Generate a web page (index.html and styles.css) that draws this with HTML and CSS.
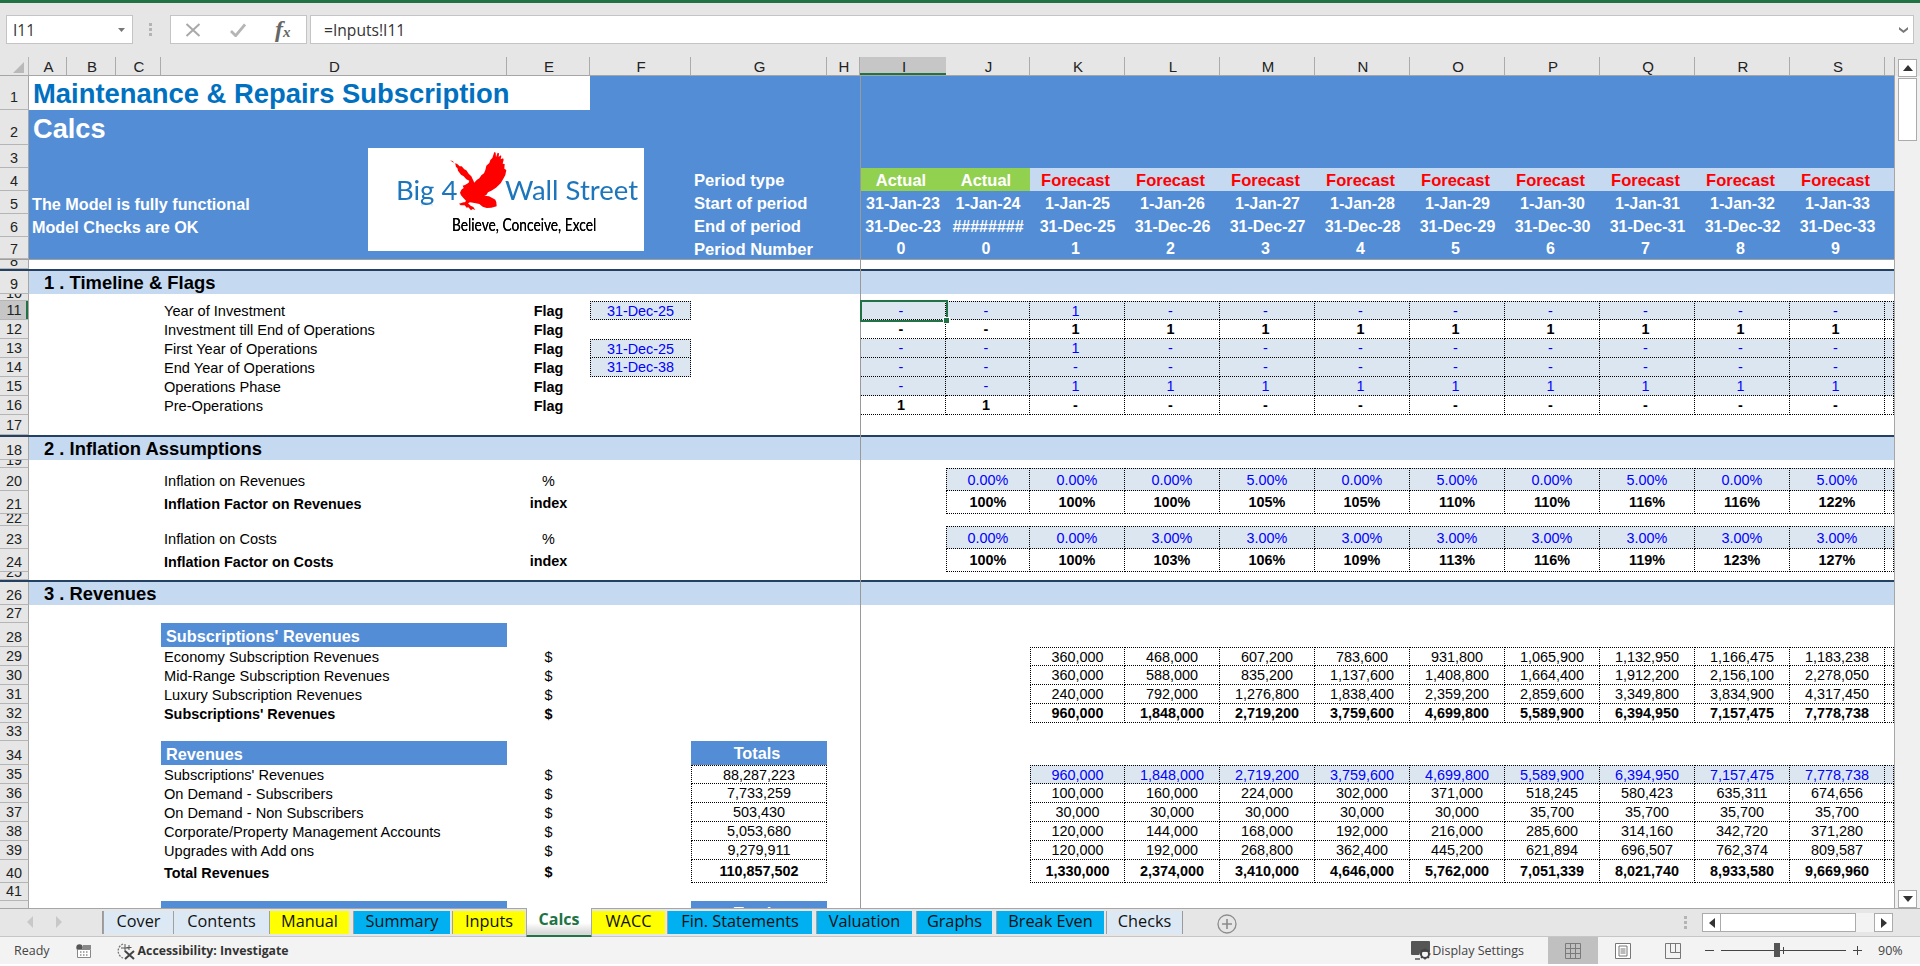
FILE: index.html
```html
<!DOCTYPE html>
<html lang="en">
<head>
<meta charset="utf-8">
<title>Maintenance &amp; Repairs Subscription - Calcs</title>
<link rel="stylesheet" href="styles.css">
</head>
<body>
<div class="app">
  <div class="titlebar"></div>

  <div class="fbar">
    <div class="namebox"><span>I11</span><svg class="ddn" viewBox="0 0 7 4"><path d="M0 0h7L3.500 4z"/></svg></div>
    <div class="grip"><i></i><i></i><i></i></div>
    <div class="fbtns">
      <svg class="ficon" viewBox="0 0 16 14"><path d="M1.500 1l13 12M14.500 1l-13 12" fill="none" stroke="#a9a9a9" stroke-width="2"/></svg>
      <svg class="ficon" viewBox="0 0 17 14"><path d="M1 8l5 5L16 1" fill="none" stroke="#b5b5b5" stroke-width="3"/></svg>
      <span class="fx"><b>f</b><em>x</em></span>
    </div>
    <div class="finput"><span>=Inputs!I11</span><svg class="chev" viewBox="0 0 9 6"><path d="M0 0l4.500 3.500L9 0v2.500L4.500 6 0 2.500z"/></svg></div>
  </div>

  <div class="main">
    <div class="left">
      <div class="cols row">
        <div class="corner"><svg viewBox="0 0 11 11"><path d="M11 0v11H0z"/></svg></div>
        <div class="ch cA">A</div><div class="ch cB">B</div><div class="ch cC">C</div><div class="ch cD">D</div>
        <div class="ch cE">E</div><div class="ch cF">F</div><div class="ch cG">G</div><div class="ch cH">H</div>
        <div class="ch cI chsel">I</div><div class="ch cJ">J</div><div class="ch cK">K</div><div class="ch cL">L</div>
        <div class="ch cM">M</div><div class="ch cN">N</div><div class="ch cO">O</div><div class="ch cP">P</div>
        <div class="ch cQ">Q</div><div class="ch cR">R</div><div class="ch cS">S</div>
      </div>

      <div class="sheet">
        <div class="row h34 blue tall"><div class="rh">1</div><div class="titlecell">Maintenance &amp; Repairs Subscription</div></div>
        <div class="row h35 blue tall"><div class="rh">2</div><div class="subtitle">Calcs</div></div>
        <div class="row h23 blue"><div class="rh">3</div></div>
        <div class="row h23 blue">
          <div class="rh">4</div>
          <div class="hl side cG">Period type</div>
          <div class="pt actual cI">Actual</div><div class="pt actual cJ">Actual</div>
          <div class="pt fc cK">Forecast</div><div class="pt fc cL">Forecast</div><div class="pt fc cM">Forecast</div><div class="pt fc cN">Forecast</div><div class="pt fc cO">Forecast</div><div class="pt fc cP">Forecast</div><div class="pt fc cQ">Forecast</div><div class="pt fc cR">Forecast</div><div class="pt fc cS">Forecast</div><div class="fc cT"></div>
        </div>
        <div class="row h23 blue">
          <div class="rh">5</div><div class="hl span-AD">The Model is fully functional</div>
          <div class="hl side cG">Start of period</div>
          <div class="hd cI">31-Jan-23</div><div class="hd cJ">1-Jan-24</div><div class="hd cK">1-Jan-25</div><div class="hd cL">1-Jan-26</div><div class="hd cM">1-Jan-27</div><div class="hd cN">1-Jan-28</div><div class="hd cO">1-Jan-29</div><div class="hd cP">1-Jan-30</div><div class="hd cQ">1-Jan-31</div><div class="hd cR">1-Jan-32</div><div class="hd cS">1-Jan-33</div>
        </div>
        <div class="row h23 blue">
          <div class="rh">6</div><div class="hl span-AD">Model Checks are OK</div>
          <div class="hl side cG">End of period</div>
          <div class="hd cI">31-Dec-23</div><div class="hd cJ">########</div><div class="hd cK">31-Dec-25</div><div class="hd cL">31-Dec-26</div><div class="hd cM">31-Dec-27</div><div class="hd cN">31-Dec-28</div><div class="hd cO">31-Dec-29</div><div class="hd cP">31-Dec-30</div><div class="hd cQ">31-Dec-31</div><div class="hd cR">31-Dec-32</div><div class="hd cS">31-Dec-33</div>
        </div>
        <div class="row h23 blue freezeh">
          <div class="rh">7</div>
          <div class="hl side cG">Period Number</div>
          <div class="hn cI">0</div><div class="hn cJ">0</div><div class="hn cK">1</div><div class="hn cL">2</div><div class="hn cM">3</div><div class="hn cN">4</div><div class="hn cO">5</div><div class="hn cP">6</div><div class="hn cQ">7</div><div class="hn cR">8</div><div class="hn cS">9</div>
        </div>
        <div class="row h11 rule short"><div class="rh">8</div></div>
        <div class="row h23 band"><div class="rh">9</div><div class="sec span-AD">1 . Timeline &amp; Flags</div></div>
        <div class="row h7 short"><div class="rh">10</div></div>

        <div class="row h19">
          <div class="rh rhsel">11</div><div class="lb cD">Year of Investment</div><div class="un b cE">Flag</div><div class="d top lft inp cF">31-Dec-25</div>
          <div class="d top inp fl cI">-</div><div class="d top inp fl cJ">-</div><div class="d top inp fl cK">1</div><div class="d top inp fl cL">-</div><div class="d top inp fl cM">-</div><div class="d top inp fl cN">-</div><div class="d top inp fl cO">-</div><div class="d top inp fl cP">-</div><div class="d top inp fl cQ">-</div><div class="d top inp fl cR">-</div><div class="d top inp fl cS">-</div><div class="d top inp cT"></div>
        </div>
        <div class="row h19">
          <div class="rh">12</div><div class="lb cD">Investment till End of Operations</div><div class="un b cE">Flag</div>
          <div class="d b fl cI">-</div><div class="d b fl cJ">-</div><div class="d b fl cK">1</div><div class="d b fl cL">1</div><div class="d b fl cM">1</div><div class="d b fl cN">1</div><div class="d b fl cO">1</div><div class="d b fl cP">1</div><div class="d b fl cQ">1</div><div class="d b fl cR">1</div><div class="d b fl cS">1</div><div class="d cT"></div>
        </div>
        <div class="row h19">
          <div class="rh">13</div><div class="lb cD">First Year of Operations</div><div class="un b cE">Flag</div><div class="d top lft inp cF">31-Dec-25</div>
          <div class="d inp fl cI">-</div><div class="d inp fl cJ">-</div><div class="d inp fl cK">1</div><div class="d inp fl cL">-</div><div class="d inp fl cM">-</div><div class="d inp fl cN">-</div><div class="d inp fl cO">-</div><div class="d inp fl cP">-</div><div class="d inp fl cQ">-</div><div class="d inp fl cR">-</div><div class="d inp fl cS">-</div><div class="d inp cT"></div>
        </div>
        <div class="row h19">
          <div class="rh">14</div><div class="lb cD">End Year of Operations</div><div class="un b cE">Flag</div><div class="d lft inp cF">31-Dec-38</div>
          <div class="d inp fl cI">-</div><div class="d inp fl cJ">-</div><div class="d inp fl cK">-</div><div class="d inp fl cL">-</div><div class="d inp fl cM">-</div><div class="d inp fl cN">-</div><div class="d inp fl cO">-</div><div class="d inp fl cP">-</div><div class="d inp fl cQ">-</div><div class="d inp fl cR">-</div><div class="d inp fl cS">-</div><div class="d inp cT"></div>
        </div>
        <div class="row h19">
          <div class="rh">15</div><div class="lb cD">Operations Phase</div><div class="un b cE">Flag</div>
          <div class="d inp fl cI">-</div><div class="d inp fl cJ">-</div><div class="d inp fl cK">1</div><div class="d inp fl cL">1</div><div class="d inp fl cM">1</div><div class="d inp fl cN">1</div><div class="d inp fl cO">1</div><div class="d inp fl cP">1</div><div class="d inp fl cQ">1</div><div class="d inp fl cR">1</div><div class="d inp fl cS">1</div><div class="d inp cT"></div>
        </div>
        <div class="row h19">
          <div class="rh">16</div><div class="lb cD">Pre-Operations</div><div class="un b cE">Flag</div>
          <div class="d b fl cI">1</div><div class="d b fl cJ">1</div><div class="d b fl cK">-</div><div class="d b fl cL">-</div><div class="d b fl cM">-</div><div class="d b fl cN">-</div><div class="d b fl cO">-</div><div class="d b fl cP">-</div><div class="d b fl cQ">-</div><div class="d b fl cR">-</div><div class="d b fl cS">-</div><div class="d cT"></div>
        </div>
        <div class="row h22 rule"><div class="rh">17</div></div>
        <div class="row h23 band"><div class="rh">18</div><div class="sec span-AD">2 . Inflation Assumptions</div></div>
        <div class="row h8 short"><div class="rh">19</div></div>

        <div class="row h23">
          <div class="rh">20</div><div class="lb low cD">Inflation on Revenues</div><div class="un low cE">%</div>
          <div class="d top lft inp cJ">0.00%</div><div class="d top inp cK">0.00%</div><div class="d top inp cL">0.00%</div><div class="d top inp cM">5.00%</div><div class="d top inp cN">0.00%</div><div class="d top inp cO">5.00%</div><div class="d top inp cP">0.00%</div><div class="d top inp cQ">5.00%</div><div class="d top inp cR">0.00%</div><div class="d top inp cS">5.00%</div><div class="d top inp cT"></div>
        </div>
        <div class="row h23">
          <div class="rh">21</div><div class="lb low b cD">Inflation Factor on Revenues</div><div class="un b cE">index</div>
          <div class="d lft b cJ">100%</div><div class="d b cK">100%</div><div class="d b cL">100%</div><div class="d b cM">105%</div><div class="d b cN">105%</div><div class="d b cO">110%</div><div class="d b cP">110%</div><div class="d b cQ">116%</div><div class="d b cR">116%</div><div class="d b cS">122%</div><div class="d cT"></div>
        </div>
        <div class="row h12 short"><div class="rh">22</div></div>
        <div class="row h23">
          <div class="rh">23</div><div class="lb low cD">Inflation on Costs</div><div class="un low cE">%</div>
          <div class="d top lft inp cJ">0.00%</div><div class="d top inp cK">0.00%</div><div class="d top inp cL">3.00%</div><div class="d top inp cM">3.00%</div><div class="d top inp cN">3.00%</div><div class="d top inp cO">3.00%</div><div class="d top inp cP">3.00%</div><div class="d top inp cQ">3.00%</div><div class="d top inp cR">3.00%</div><div class="d top inp cS">3.00%</div><div class="d top inp cT"></div>
        </div>
        <div class="row h23">
          <div class="rh">24</div><div class="lb low b cD">Inflation Factor on Costs</div><div class="un b cE">index</div>
          <div class="d lft b cJ">100%</div><div class="d b cK">100%</div><div class="d b cL">103%</div><div class="d b cM">106%</div><div class="d b cN">109%</div><div class="d b cO">113%</div><div class="d b cP">116%</div><div class="d b cQ">119%</div><div class="d b cR">123%</div><div class="d b cS">127%</div><div class="d cT"></div>
        </div>
        <div class="row h10 rule short"><div class="rh">25</div></div>
        <div class="row h23 band"><div class="rh">26</div><div class="sec span-AD">3 . Revenues</div></div>
        <div class="row h18"><div class="rh">27</div></div>

        <div class="row h24"><div class="rh">28</div><div class="blk cD">Subscriptions' Revenues</div></div>
        <div class="row h19">
          <div class="rh">29</div><div class="lb cD">Economy Subscription Revenues</div><div class="un cE">$</div>
          <div class="d top lft cK">360,000</div><div class="d top cL">468,000</div><div class="d top cM">607,200</div><div class="d top cN">783,600</div><div class="d top cO">931,800</div><div class="d top cP">1,065,900</div><div class="d top cQ">1,132,950</div><div class="d top cR">1,166,475</div><div class="d top cS">1,183,238</div><div class="d top cT"></div>
        </div>
        <div class="row h19">
          <div class="rh">30</div><div class="lb cD">Mid-Range Subscription Revenues</div><div class="un cE">$</div>
          <div class="d lft cK">360,000</div><div class="d cL">588,000</div><div class="d cM">835,200</div><div class="d cN">1,137,600</div><div class="d cO">1,408,800</div><div class="d cP">1,664,400</div><div class="d cQ">1,912,200</div><div class="d cR">2,156,100</div><div class="d cS">2,278,050</div><div class="d cT"></div>
        </div>
        <div class="row h19">
          <div class="rh">31</div><div class="lb cD">Luxury Subscription Revenues</div><div class="un cE">$</div>
          <div class="d lft cK">240,000</div><div class="d cL">792,000</div><div class="d cM">1,276,800</div><div class="d cN">1,838,400</div><div class="d cO">2,359,200</div><div class="d cP">2,859,600</div><div class="d cQ">3,349,800</div><div class="d cR">3,834,900</div><div class="d cS">4,317,450</div><div class="d cT"></div>
        </div>
        <div class="row h19">
          <div class="rh">32</div><div class="lb b cD">Subscriptions' Revenues</div><div class="un b cE">$</div>
          <div class="d lft b cK">960,000</div><div class="d b cL">1,848,000</div><div class="d b cM">2,719,200</div><div class="d b cN">3,759,600</div><div class="d b cO">4,699,800</div><div class="d b cP">5,589,900</div><div class="d b cQ">6,394,950</div><div class="d b cR">7,157,475</div><div class="d b cS">7,778,738</div><div class="d cT"></div>
        </div>
        <div class="row h18"><div class="rh">33</div></div>

        <div class="row h24"><div class="rh">34</div><div class="blk cD">Revenues</div><div class="blk ctr cG">Totals</div></div>
        <div class="row h19">
          <div class="rh">35</div><div class="lb cD">Subscriptions' Revenues</div><div class="un cE">$</div><div class="d top lft cG">88,287,223</div>
          <div class="d top lft inp cK">960,000</div><div class="d top inp cL">1,848,000</div><div class="d top inp cM">2,719,200</div><div class="d top inp cN">3,759,600</div><div class="d top inp cO">4,699,800</div><div class="d top inp cP">5,589,900</div><div class="d top inp cQ">6,394,950</div><div class="d top inp cR">7,157,475</div><div class="d top inp cS">7,778,738</div><div class="d top inp cT"></div>
        </div>
        <div class="row h19">
          <div class="rh">36</div><div class="lb cD">On Demand - Subscribers</div><div class="un cE">$</div><div class="d lft cG">7,733,259</div>
          <div class="d lft cK">100,000</div><div class="d cL">160,000</div><div class="d cM">224,000</div><div class="d cN">302,000</div><div class="d cO">371,000</div><div class="d cP">518,245</div><div class="d cQ">580,423</div><div class="d cR">635,311</div><div class="d cS">674,656</div><div class="d cT"></div>
        </div>
        <div class="row h19">
          <div class="rh">37</div><div class="lb cD">On Demand - Non Subscribers</div><div class="un cE">$</div><div class="d lft cG">503,430</div>
          <div class="d lft cK">30,000</div><div class="d cL">30,000</div><div class="d cM">30,000</div><div class="d cN">30,000</div><div class="d cO">30,000</div><div class="d cP">35,700</div><div class="d cQ">35,700</div><div class="d cR">35,700</div><div class="d cS">35,700</div><div class="d cT"></div>
        </div>
        <div class="row h19">
          <div class="rh">38</div><div class="lb cD">Corporate/Property Management Accounts</div><div class="un cE">$</div><div class="d lft cG">5,053,680</div>
          <div class="d lft cK">120,000</div><div class="d cL">144,000</div><div class="d cM">168,000</div><div class="d cN">192,000</div><div class="d cO">216,000</div><div class="d cP">285,600</div><div class="d cQ">314,160</div><div class="d cR">342,720</div><div class="d cS">371,280</div><div class="d cT"></div>
        </div>
        <div class="row h19">
          <div class="rh">39</div><div class="lb cD">Upgrades with Add ons</div><div class="un cE">$</div><div class="d lft cG">9,279,911</div>
          <div class="d lft cK">120,000</div><div class="d cL">192,000</div><div class="d cM">268,800</div><div class="d cN">362,400</div><div class="d cO">445,200</div><div class="d cP">621,894</div><div class="d cQ">696,507</div><div class="d cR">762,374</div><div class="d cS">809,587</div><div class="d cT"></div>
        </div>
        <div class="row h23">
          <div class="rh">40</div><div class="lb low b cD">Total Revenues</div><div class="un b cE">$</div><div class="d lft b cG">110,857,502</div>
          <div class="d lft b cK">1,330,000</div><div class="d b cL">2,374,000</div><div class="d b cM">3,410,000</div><div class="d b cN">4,646,000</div><div class="d b cO">5,762,000</div><div class="d b cP">7,051,339</div><div class="d b cQ">8,021,740</div><div class="d b cR">8,933,580</div><div class="d b cS">9,669,960</div><div class="d cT"></div>
        </div>
        <div class="row h18"><div class="rh">41</div></div>
        <div class="row h24"><div class="rh">42</div><div class="blk cD"></div><div class="blk ctr cG">Totals</div></div>

        <div class="freezev"></div>
        <div class="selcell"><i></i></div>

        <div class="logo">
          <div class="brand"><span>Big 4</span><span>Wall Street</span></div>
          <div class="motto">Believe, Conceive, Excel</div>
          <svg class="eagle" viewBox="0 0 210 216"><path d="M15 37l9 3 3 6 9 1 8 8 6 0 8 9 6 3 7 10 8 8 9 19 7-8 8-5 6-9 8-6 4-10 3-13 9-8 3-9 6-6 6-18 4 2 1 14 5-14 4 2-1 11 6-5 2 2-2 10 7-3 2 4-3 12 6 1-1 14 6 4-3 15-6 11-8 14-14 13-14 9-10 5-5 8-6 2 14 2 10 5 9 5 3 8 1 12-16 4-14 1-12-4-10-8-14-3-14-2-6 3 8 7 8 4 6 9-8-3-5 4-8-9-5 1-6-7-12 0-5-5 14-4 4 0 3-5-7-7-8-9-3-8 4-9 7-5-3-7 7-2 11-7 2-6-9-4-8-9-8-5-9-12-2-8-4-3-2-9z" fill="#f00"/></svg>
        </div>
      </div>
    </div>
    <div class="vscroll">
      <div class="sbtn"><svg viewBox="0 0 10 6"><path d="M0 6h10L5 0z"/></svg></div>
      <div class="vthumb"></div>
      <div class="vtrack"></div>
      <div class="sbtn"><svg viewBox="0 0 10 6"><path d="M0 0h10L5 6z"/></svg></div>
    </div>
  </div>

  <div class="tabbar">
    <div class="tabnav">
      <svg viewBox="0 0 6 12"><path d="M6 0v12L0 6z"/></svg>
      <svg viewBox="0 0 6 12"><path d="M0 0v12l6-6z"/></svg>
    </div>
    <div class="tabs">
      <div class="tab lite t1">Cover</div>
      <div class="tab lite t2">Contents</div>
      <div class="tab yel t3">Manual</div>
      <div class="tab cya t4">Summary</div>
      <div class="tab yel t5">Inputs</div>
      <div class="tab act t6">Calcs</div>
      <div class="tab yel t7">WACC</div>
      <div class="tab cya t8">Fin. Statements</div>
      <div class="tab cya t9">Valuation</div>
      <div class="tab cya t10">Graphs</div>
      <div class="tab cya t11">Break Even</div>
      <div class="tab lite t12">Checks</div>
    </div>
    <svg class="addtab" viewBox="0 0 20 20"><circle cx="10" cy="10" r="9" fill="none" stroke="#8c8c8c" stroke-width="1.300"/><path d="M10 5v10M5 10h10" stroke="#8c8c8c" stroke-width="1.600"/></svg>
    <div class="grip hgrip"><i></i><i></i><i></i></div>
    <div class="hscroll">
      <div class="sbtn h"><svg viewBox="0 0 6 10"><path d="M6 0v10L0 5z"/></svg></div>
      <div class="hthumb"></div>
      <div class="htrack"></div>
      <div class="sbtn h"><svg viewBox="0 0 6 10"><path d="M0 0v10l6-5z"/></svg></div>
    </div>
  </div>

  <div class="status">
    <span class="ready">Ready</span>
    <svg class="macro" viewBox="0 0 15 14"><circle cx="3.500" cy="3.500" r="3.200" fill="#555"/><path d="M7 1h8v4H7z" fill="#888"/><path d="M1.500 5.500h13v8h-13z" fill="#fff" stroke="#888"/><path d="M4 8h1.500M7 8h1.500M10 8h1.500M4 11h1.500M7 11h1.500M10 11h1.500" stroke="#555"/></svg>
    <svg class="acc" viewBox="0 0 20 18"><path d="M7 2A7.500 7.500 0 0 0 7 16" fill="none" stroke="#777" stroke-width="1.300" stroke-dasharray="2 1.200"/><path d="M9 0v8M5 4h8" stroke="#555" transform="translate(0 2)"/><path d="M13 3v5M10.500 5.500h5" stroke="#555"/><path d="M9 9l9 8M18 9l-9 8" stroke="#444" stroke-width="2"/></svg>
    <b class="acctext">Accessibility: Investigate</b>
    <div class="status-right">
      <svg class="disp" viewBox="0 0 20 19"><path d="M1 0h17a1 1 0 0 1 1 1v10H11l-3 2 0 1H1a1 1 0 0 1-1-1V1a1 1 0 0 1 1-1z" fill="#555"/><circle cx="14" cy="13" r="4" fill="none" stroke="#444" stroke-width="2"/><path d="M14 7.500v2M14 16.500v2M8.500 13h2M17.500 13h2M10 9l1.500 1.500M16.500 15.500L18 17M18 9l-1.500 1.500M11.500 15.500L10 17" stroke="#444" stroke-width="1.500"/><path d="M4 18h5" stroke="#555" stroke-width="1.500"/></svg>
      <span class="disptext">Display Settings</span>
      <div class="view on"><svg viewBox="0 0 16 16"><path d="M.5.500h15v15H.500zM5.500.500v15M10.500.500v15M.5 5.500h15M.5 10.500h15" fill="none" stroke="#7a7a7a"/></svg></div>
      <div class="view"><svg viewBox="0 0 16 16"><path d="M.5.500h15v15H.500z" fill="#fff" stroke="#777"/><path d="M4 3h8v10H4zM5.500 6h5M5.500 8h5M5.500 10h5" fill="none" stroke="#777"/></svg></div>
      <div class="view"><svg viewBox="0 0 16 16"><path d="M.5.500h15v15H.500zM5.500.500v9h10M10.500.500v9" fill="none" stroke="#777"/></svg></div>
      <div class="zoom">
        <span class="zm"></span>
        <div class="slider"><i class="knob"></i><i class="tick"></i></div>
        <span class="zp"></span>
        <span class="pct">90%</span>
      </div>
    </div>
  </div>
</div>
</body>
</html>
```

FILE: styles.css
```css
* { box-sizing: border-box; }
html, body { margin: 0; height: 100%; background: #fff; overflow: hidden; }
body { font: 14.4px "Liberation Sans", Arial, sans-serif; color: #000; }

.app { width: 1920px; height: 964px; display: flex; flex-direction: column; background: #e6e6e6; }
.titlebar { height: 3px; background: #217346; flex: none; }

/* formula bar */
.fbar { height: 54px; flex: none; display: flex; align-items: flex-start; padding: 12px 6px 0 6px; font-family: "Open Sans", sans-serif; }
.namebox, .fbtns, .finput { height: 29px; background: #fff; border: 1px solid #c4c4c4; display: flex; align-items: center; }
.namebox { width: 127px; padding: 0 7px 0 6px; justify-content: space-between; font-size: 15.500px; color: #333; }
.ddn { width: 7px; height: 4px; fill: #777; }
.grip { display: flex; flex-direction: column; gap: 2px; width: 4px; }
.grip i { width: 3px; height: 3px; background: #b4b4b4; display: block; }
.fbar > .grip { margin: 8px 17px 0 16px; }
.fbtns { width: 137px; margin-right: 3px; padding-left: 14px; }
.ficon { width: 16px; height: 14px; margin-right: 29px; flex: none; }
.fx { font: italic 19px "Liberation Serif", serif; color: #666; white-space: nowrap; }
.fx b { font-weight: 700; font-size: 24px; }
.fx em { font-size: 15px; font-weight: 700; }
.finput { flex: 1; padding: 0 5px 0 13px; justify-content: space-between; font-size: 15.600px; color: #333; }
.chev { width: 9px; height: 6px; fill: #777; }

/* main */
.main { flex: none; height: 851px; display: flex; }
.left { width: 1895px; flex: none; display: flex; flex-direction: column; border-right: 1px solid #a6a6a6; }

.row {
  display: grid;
  grid-template-columns: [RH] 29px [A] 38px [B] 49px [C] 45px [D] 346px [E] 83px [F] 101px [G] 136px [H] 33px [I] 86px [J] 84px [K] 95px [L] 95px [M] 95px [N] 95px [O] 95px [P] 95px [Q] 95px [R] 95px [S] 95px [T] 9px;
  grid-template-rows: minmax(0, 1fr);
}
.row > * { grid-row: 1; min-width: 0; overflow: hidden; white-space: nowrap; display: flex; align-items: center; justify-content: center; }

.cA { grid-column: A; } .cB { grid-column: B; } .cC { grid-column: C; } .cD { grid-column: D; }
.cE { grid-column: E; } .cF { grid-column: F; } .cG { grid-column: G; } .cH { grid-column: H; }
.cI { grid-column: I; } .cJ { grid-column: J; } .cK { grid-column: K; } .cL { grid-column: L; }
.cM { grid-column: M; } .cN { grid-column: N; } .cO { grid-column: O; } .cP { grid-column: P; }
.cQ { grid-column: Q; } .cR { grid-column: R; } .cS { grid-column: S; } .cT { grid-column: T; }
.span-AD { grid-column: A / E; }

.cols { height: 19px; flex: none; background: #e6e6e6; border-bottom: 1px solid #a6a6a6; }
.corner { grid-column: RH; justify-content: flex-end !important; align-items: flex-start !important; padding: 5px 4px 0 0; border-right: 1px solid #b5b5b5; }
.corner svg { width: 11px; height: 11px; fill: #b9b9b9; }
.ch { border-right: 1px solid #ababab; font-size: 15px; color: #222; padding-left: 2px; }
.chsel { background: #c6c6c6; border-right: 0; box-shadow: inset 0 -2px 0 #217346; }

.sheet { flex: 1; position: relative; overflow: hidden; background: #fff; }

.h7 { height: 7px; } .h8 { height: 8px; } .h10 { height: 10px; } .h11 { height: 11px; } .h12 { height: 12px; }
.h18 { height: 18px; } .h19 { height: 19px; } .h22 { height: 22px; } .h23 { height: 23px; } .h24 { height: 24px; }
.h34 { height: 34px; } .h35 { height: 35px; }

.row > .rh { grid-column: RH; background: #e6e6e6; border-right: 1px solid #a6a6a6; border-bottom: 1px solid #b5b5b5; font-size: 14.400px; line-height: 18px; color: #222; align-items: flex-end; }
.row > .rhsel { background: #c6c6c6; box-shadow: inset -2px 0 0 #217346; }
.short > .rh { line-height: 14px; }
.tall > .rh { padding-bottom: 3px; }

.blue { background: #538dd5; color: #fff; }
.band { background: #c5d9f1; }
.freezeh { border-bottom: 1px solid #a0a0a0; }
.rule { border-bottom: 2px solid #244062; }

.titlecell { grid-column: A / F; background: #fff; color: #0070c0; font-weight: 700; font-size: 27.400px; justify-content: flex-start !important; padding: 2px 0 0 4px; }
.subtitle { grid-column: A / F; font-weight: 700; font-size: 27.200px; justify-content: flex-start !important; padding: 2px 0 0 4px; }

.hl { font-weight: 700; font-size: 16.200px; justify-content: flex-start !important; padding: 3px 0 0 3px; }
.hl.side { font-size: 16.600px; }
.pt { font-weight: 700; font-size: 16.500px; padding: 2px 4px 0 0; }
.actual { background: #92d050; }
.fc { background: #c5d9f1; color: #f00; }
.hd { font-weight: 700; font-size: 16px; padding-top: 2px; }
.hn { font-weight: 700; font-size: 16px; padding: 2px 4px 0 0; }

.sec { font-weight: 700; font-size: 18.400px; justify-content: flex-start !important; padding: 1px 0 0 15px; }
.lb { justify-content: flex-start !important; padding-left: 3px; font-size: 14.600px; }
.low { padding-top: 3px; }
.b { font-weight: 700; }
.lb.b { font-size: 14.400px; }
.blk { background: #538dd5; color: #fff; font-weight: 700; font-size: 16.300px; justify-content: flex-start !important; padding: 2px 0 0 5px; }
.blk.ctr { justify-content: center !important; padding: 1px 4px 1px 0; }

.d { border-right: 1px dotted #000; border-bottom: 1px dotted #000; }
.top { border-top: 1px dotted #000; }
.lft { border-left: 1px dotted #000; }
.inp { background: #dce6f1; color: #00f; }
.fl { padding-right: 3px; }

.freezev { position: absolute; left: 860px; top: 0; bottom: 0; width: 1px; background: #9a9a9a; }
.selcell { position: absolute; left: 860px; top: 224px; width: 88px; height: 22px; border: 2px solid #217346; }
.selcell i { position: absolute; right: -4px; bottom: -4px; width: 5px; height: 5px; background: #217346; border: 1px solid #fff; box-sizing: content-box; }

/* logo */
.logo { position: absolute; left: 368px; top: 72px; width: 276px; height: 103px; background: #fff; padding: 24px 6px 0 28px; color: #000; }
.brand { display: flex; justify-content: space-between; font: 27.500px/36px Lato, sans-serif; color: #1d75bc; -webkit-box-reflect: below -9px linear-gradient(transparent 78%, rgba(255,255,255,.55)); }
.motto { font: 17.400px/22px Lato, sans-serif; margin: 6px 0 0 56px; white-space: nowrap; transform: scaleX(.79); transform-origin: left center; text-shadow: 0 0 .5px #000; }
.eagle { position: absolute; left: 77px; top: 0; width: 70px; height: 72px; }

/* vertical scroll */
.vscroll { flex: 1; display: flex; flex-direction: column; padding: 2px 3px 0 3px; background: linear-gradient(#e6e6e6 19px, #f0f0f0 19px); }
.sbtn { background: #fff; border: 1px solid #ababab; display: flex; align-items: center; justify-content: center; flex: none; height: 18px; }
.sbtn svg { width: 10px; height: 6px; fill: #333; }
.vthumb { height: 63px; background: #fff; border: 1px solid #ababab; margin-top: 1px; flex: none; }
.vtrack { flex: 1; }
.sbtn.h { width: 19px; height: 19px; }
.sbtn.h svg { width: 6px; height: 10px; }

/* tabs */
.tabbar { height: 29px; flex: none; display: flex; align-items: flex-start; border-top: 1px solid #a6a6a6; border-bottom: 1px solid #c6c6c6; font-family: "Open Sans", sans-serif; position: relative; }
.tabnav { width: 103px; flex: none; display: flex; gap: 23px; padding: 5px 0 0 27px; border-right: 1px solid #9a9a9a; height: 23px; margin-top: 2px; }
.tabnav svg { width: 6px; height: 12px; fill: #c8c8c8; }
.tabs { display: flex; align-items: flex-start; flex: none; }
.tab { height: 23px; margin-top: 2px; display: flex; align-items: center; justify-content: center; font-size: 16.300px; line-height: 20px; color: #111; padding-bottom: 4px; flex: none; box-shadow: -1px 0 0 #a0a0a0; }
.lite { background: #dce9f5; }
.yel { background: #ff0; }
.cya { background: #00b0f0; }
.act { height: 30px; margin-top: -1px; background: linear-gradient(#fff 55%, #d9d9d9 92%); border: 1px solid #a6a6a6; border-top: 0; border-bottom: 3px solid #217346; color: #217346; font-weight: 700; font-size: 16px; padding-bottom: 7px; padding-top: 1px; box-shadow: none; }
.t1 { width: 69px; margin-left: 1px; }
.t2 { width: 95px; margin-left: 1px; }
.t3 { width: 79px; margin-left: 1px; }
.t4 { width: 96px; margin-left: 5px; }
.t5 { width: 72px; margin-left: 3px; }
.t6 { width: 66px; margin-left: 1px; }
.t7 { width: 73px; margin-left: 0; box-shadow: none; }
.t8 { width: 144px; margin-left: 3px; }
.t9 { width: 95px; margin-left: 5px; }
.t10 { width: 75px; margin-left: 5px; }
.t11 { width: 107px; margin-left: 5px; }
.t12 { width: 76px; margin-left: 3px; border-right: 1px solid #9a9a9a; }
.addtab { width: 20px; height: 20px; margin: 5px 0 0 34px; flex: none; }
.hgrip { position: absolute; left: 1684px; top: 7px; }
.hscroll { position: absolute; left: 1702px; top: 4px; width: 191px; height: 19px; display: flex; background: #f3f3f3; }
.hthumb { width: 135px; background: #fff; border: 1px solid #ababab; border-left: 0; }
.htrack { flex: 1; }

/* status */
.status { height: 27px; flex: none; background: #f3f3f3; display: flex; align-items: center; font: 12.500px "Open Sans", sans-serif; color: #444; position: relative; }
.ready { margin-left: 14px; }
.macro { width: 15px; height: 14px; margin-left: 26px; }
.acc { width: 20px; height: 18px; margin-left: 25px; }
.acctext { margin-left: 2px; color: #333; font-size: 12.300px; }
.status-right { margin-left: auto; display: flex; align-items: center; height: 100%; }
.disp { width: 20px; height: 19px; }
.disptext { margin: 0 24px 0 1px; white-space: nowrap; }
.view { width: 50px; height: 100%; display: flex; align-items: center; justify-content: center; }
.view.on { background: #c0c0c0; }
.view svg { width: 16px; height: 16px; }
.zoom { display: flex; align-items: center; margin: 0 18px 0 7px; height: 100%; }
.zm { width: 9px; height: 1px; background: #444; }
.zp { width: 9px; height: 9px; background: linear-gradient(#444,#444) center/100% 1px no-repeat, linear-gradient(#444,#444) center/1px 100% no-repeat; margin-left: 7px; }
.slider { width: 125px; height: 1px; background: #444; margin-left: 7px; position: relative; }
.knob { position: absolute; left: 53px; top: -7px; width: 6px; height: 14px; background: #555; }
.tick { position: absolute; left: 62px; top: -3px; width: 1px; height: 7px; background: #444; }
.pct { margin-left: 16px; width: 24px; white-space: nowrap; }
```
